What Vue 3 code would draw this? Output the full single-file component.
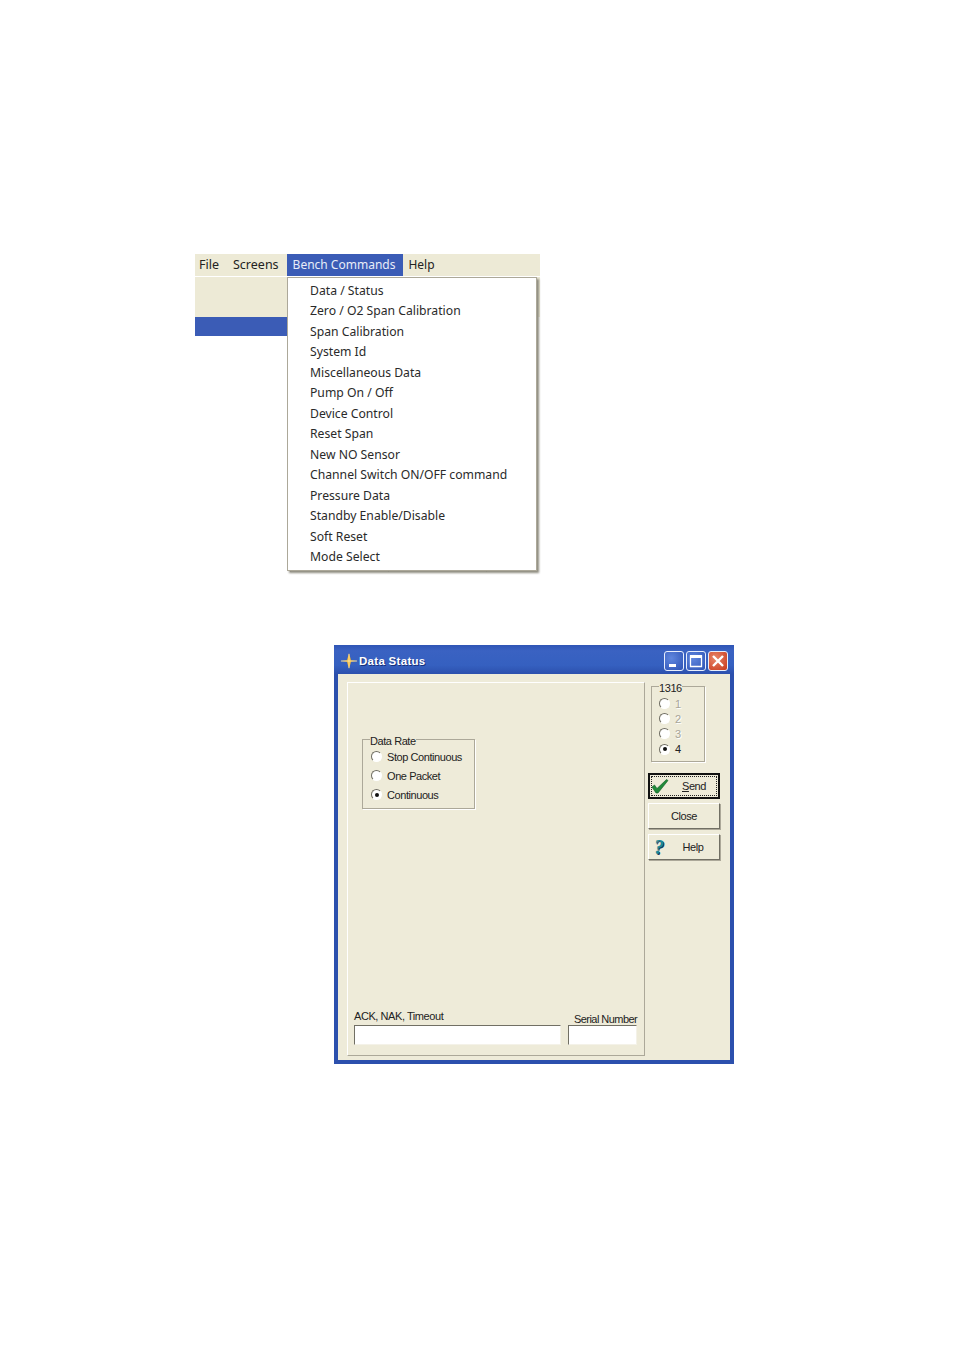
<script setup>
const menuItems = ['Data / Status','Zero / O2 Span Calibration','Span Calibration','System Id','Miscellaneous Data','Pump On / Off','Device Control','Reset Span','New NO Sensor','Channel Switch ON/OFF command','Pressure Data','Standby Enable/Disable','Soft Reset','Mode Select']
const rates = [{t:'Stop Continuous'},{t:'One Packet'},{t:'Continuous',on:true}]
const channels = [{t:'1',off:true},{t:'2',off:true},{t:'3',off:true},{t:'4',on:true}]
</script>

<template>
  <div class="page">
    <section class="shot">
      <div class="menubar">
        <span class="mi">File</span>
        <span class="mi screens">Screens</span>
        <span class="mi active">Bench Commands</span>
        <span class="mi help-item">Help</span>
      </div>
      <div class="under">
        <div class="under-left">
          <div class="strip"></div>
        </div>
        <div class="under-right"></div>
        <div class="ticks"><i></i><i></i><i></i></div>
        <ul class="dropdown">
          <li v-for="m in menuItems" :key="m">{{ m }}</li>
        </ul>
      </div>
    </section>

    <section class="win">
      <header class="title">
        <svg class="appicon" width="18" height="16" viewBox="0 0 18 16">
          <path d="M0 8 L7 7.2 L9 0 L11 7.2 L18 8 L11 8.8 L9 16 L7 8.8 Z" fill="#f4b52e"/>
          <path d="M1 8H17M9 1V15" stroke="#fff3c8" stroke-width=".7"/>
        </svg>
        <span class="caption">Data Status</span>
        <div class="ctrls">
          <span class="cb"><svg width="20" height="20" viewBox="0 0 20 20"><rect x="5" y="13" width="7" height="3" fill="#fff"/></svg></span>
          <span class="cb"><svg width="20" height="20" viewBox="0 0 20 20"><path d="M4.5 5H15.5V15.5H4.5Z" fill="none" stroke="#fff" stroke-width="1.3"/><rect x="4" y="4" width="12" height="3" fill="#fff"/></svg></span>
          <span class="cb close"><svg width="20" height="20" viewBox="0 0 20 20"><path d="M5 5L15 15M15 5L5 15" stroke="#fff" stroke-width="2.4"/></svg></span>
        </div>
      </header>
      <div class="client">
        <div class="panel">
          <fieldset class="group rate">
            <legend>Data Rate</legend>
            <label v-for="r in rates" :key="r.t" class="radio">
              <span class="dot" :class="{ on: r.on }"></span>{{ r.t }}
            </label>
          </fieldset>
          <div class="fields">
            <div class="field wide">
              <span>ACK, NAK, Timeout</span>
              <div class="box"></div>
            </div>
            <div class="field narrow">
              <span>Serial Number</span>
              <div class="box"></div>
            </div>
          </div>
        </div>
        <aside class="side">
          <fieldset class="group chan">
            <legend>1316</legend>
            <label v-for="c in channels" :key="c.t" class="radio" :class="{ off: c.off }">
              <span class="dot" :class="{ on: c.on }"></span>{{ c.t }}
            </label>
          </fieldset>
          <button class="btn send">
            <span class="focus">
              <svg class="check" width="18" height="16" viewBox="0 0 18 16">
                <path d="M1 9 L3.5 7 L6 10.5 L15.5 1.5 L17 2.5 L7 15 L5 15 Z" fill="#1f8a3a" stroke="#0d5c24" stroke-width=".6"/>
              </svg>
              <span class="lbl"><u>S</u>end</span>
            </span>
          </button>
          <button class="btn">Close</button>
          <button class="btn help">
            <span class="q">?</span>
            <span class="lbl">Help</span>
          </button>
        </aside>
      </div>
    </section>
  </div>
</template>

<style scoped>
.page {
  width: 954px;
  height: 1350px;
  box-sizing: border-box;
  padding: 254px 0 0 195px;
  background: #fff;
  font-family: "Liberation Sans", Arial, sans-serif;
  color: #222;
  overflow: hidden;
}

/* menu picture */
.shot { width: 345px; }
.menubar {
  height: 23px;
  box-sizing: border-box;
  display: flex;
  background: #edead6;
  font-family: "Noto Sans", sans-serif;
  font-size: 12.5px;
  line-height: 22px;
  border-bottom: 1px solid #fff;
}
.mi { padding: 0 4px; margin-right: 6px; }
.mi.screens { margin-right: 4px; }
.mi.active {
  background: #3b5cb6;
  color: #e8ecf8;
  font-size: 12px;
  padding: 0 8px 0 6px;
  margin: 0;
}
.mi.help-item { padding-left: 5px; font-size: 12px; }
.under { position: relative; height: 298px; }
.under-left { width: 92px; height: 59px; background: #edead6; padding-top: 40px; box-sizing: border-box; }
.strip { height: 19px; background: #3b5cb6; }
.under-right {
  position: absolute;
  left: 92px;
  right: 0;
  top: 0;
  height: 40px;
  background: #edead6;
}
.ticks { position: absolute; left: 95px; top: 290px; display: flex; gap: 97px; }
.ticks i { width: 1px; height: 5px; background: #aaa; }
.dropdown {
  position: absolute;
  left: 92px;
  top: 0;
  width: 250px;
  height: 294px;
  box-sizing: border-box;
  margin: 0;
  padding: 2.5px 0 0;
  list-style: none;
  background: #fff;
  border: 1px solid #aca899;
  box-shadow: 2px 2px 2px #8f8d80;
  font-family: "Noto Sans", sans-serif;
  font-size: 12.2px;
  color: #2a2a2a;
}
.dropdown li { height: 20.5px; line-height: 20px; padding-left: 22px; white-space: nowrap; }

/* dialog */
.win {
  width: 400px;
  height: 419px;
  margin: 70px 0 0 139px;
  box-sizing: border-box;
  display: flex;
  flex-direction: column;
  background: #2c50ad;
  border-radius: 3px 3px 0 0;
  font-size: 11px;
  letter-spacing: -.43px;
  color: #222;
}
.title {
  height: 29px;
  flex: none;
  display: flex;
  align-items: center;
  padding: 3px 6px 0 6px;
  box-sizing: border-box;
  background: linear-gradient(#2f55b5, #3a62c2 20%, #3560c0 70%, #2c50ad);
}
.appicon { flex: none; }
.caption {
  margin-left: 1px;
  color: #fff;
  font-weight: 700;
  font-family: "Liberation Sans", sans-serif;
  font-size: 11.5px;
  letter-spacing: .3px;
  text-shadow: 1px 1px 0 #17307a;
}
.ctrls { margin-left: auto; display: flex; gap: 2px; }
.cb {
  width: 20px;
  height: 20px;
  box-sizing: border-box;
  display: block;
  border: 1px solid #e8eefc;
  border-radius: 3px;
  background: radial-gradient(circle at 35% 35%, #5f86de, #2d52b4);
  overflow: hidden;
}
.cb svg { display: block; margin: -1px; }
.cb.close { background: radial-gradient(circle at 35% 35%, #e8866a, #c8381a); }

.client {
  flex: 1;
  margin: 0 4px 4px;
  background: #eeebd9;
  display: flex;
  padding: 8px 10px 4px 9px;
  gap: 3px;
  box-sizing: border-box;
}
.panel {
  width: 298px;
  box-sizing: border-box;
  border: 1px solid;
  border-color: #fff #aca899 #aca899 #fff;
  display: flex;
  flex-direction: column;
  padding: 51px 6px 10px 6px;
}
.group {
  margin: 0;
  border: 1px solid #aca899;
  box-shadow: 1px 1px 0 #fff;
  box-sizing: border-box;
}
.group legend { padding: 0; height: 10px; line-height: 14px; font-size: 11px; }
.radio { display: flex; align-items: center; white-space: nowrap; }
.radio.off { color: #a8a698; text-shadow: 1px 1px 0 #fff; }
.dot {
  width: 11px;
  height: 11px;
  box-sizing: border-box;
  border-radius: 50%;
  flex: none;
  background: #fff;
  border: 1px solid;
  border-color: #6f6d62 #fff #fff #6f6d62;
  position: relative;
}
.dot.on::after {
  content: "";
  position: absolute;
  left: 2.5px;
  top: 2.5px;
  width: 4px;
  height: 4px;
  border-radius: 50%;
  background: #111;
}
.rate {
  width: 113px;
  height: 75px;
  margin-left: 8px;
  padding: 3px 0 0 8px;
}
.rate legend { margin-left: -1px; }
.rate .radio { height: 19.2px; gap: 5px; }
.fields {
  margin-top: auto;
  display: flex;
  align-items: flex-end;
  gap: 7px;
}
.field { display: flex; flex-direction: column; }
.field span { line-height: 14px; white-space: nowrap; }
.field.wide { width: 207px; }
.field.wide span { margin-bottom: 2px; }
.field.narrow { width: 69px; }
.field.narrow span { margin: 0 0 -1px 6px; letter-spacing: -.55px; }
.box {
  height: 20px;
  box-sizing: border-box;
  background: #fff;
  border: 1px solid;
  border-color: #716f64 #f4f2e8 #f4f2e8 #716f64;
}
.side { width: 72px; display: flex; flex-direction: column; }
.chan {
  width: 54px;
  height: 81px;
  flex: none;
  margin: -1px 0 11px 3px;
  padding: 5px 0 0 7px;
}
.chan .radio { height: 15.2px; gap: 5px; }
.btn {
  display: flex;
  align-items: center;
  justify-content: center;
  width: 72px;
  height: 26px;
  padding: 0;
  margin: 0 0 4px;
  flex: none;
  font: inherit;
  letter-spacing: inherit;
  color: #222;
  background: #eeebd9;
  border: 1px solid;
  border-color: #fff #716f64 #716f64 #fff;
  box-shadow: 1px 1px 0 #aca899;
  box-sizing: border-box;
}
.btn.send { border: 2px solid #111; padding: 1px; box-shadow: none; }
.focus {
  flex: 1;
  align-self: stretch;
  display: flex;
  align-items: center;
  border: 1px dotted #222;
}
.check { flex: none; margin-left: -1px; }
.focus .lbl { margin-left: 13px; }
.btn.help { margin-top: 1px; justify-content: flex-start; }
.q {
  margin-left: 5px;
  font: italic 700 20px "Liberation Serif", serif;
  color: #1b8a9a;
  text-shadow: 1px 1px 0 #123a5a;
}
.help .lbl { margin-left: 19px; }
</style>

<style>
html, body { margin: 0; background: #fff; }
</style>
